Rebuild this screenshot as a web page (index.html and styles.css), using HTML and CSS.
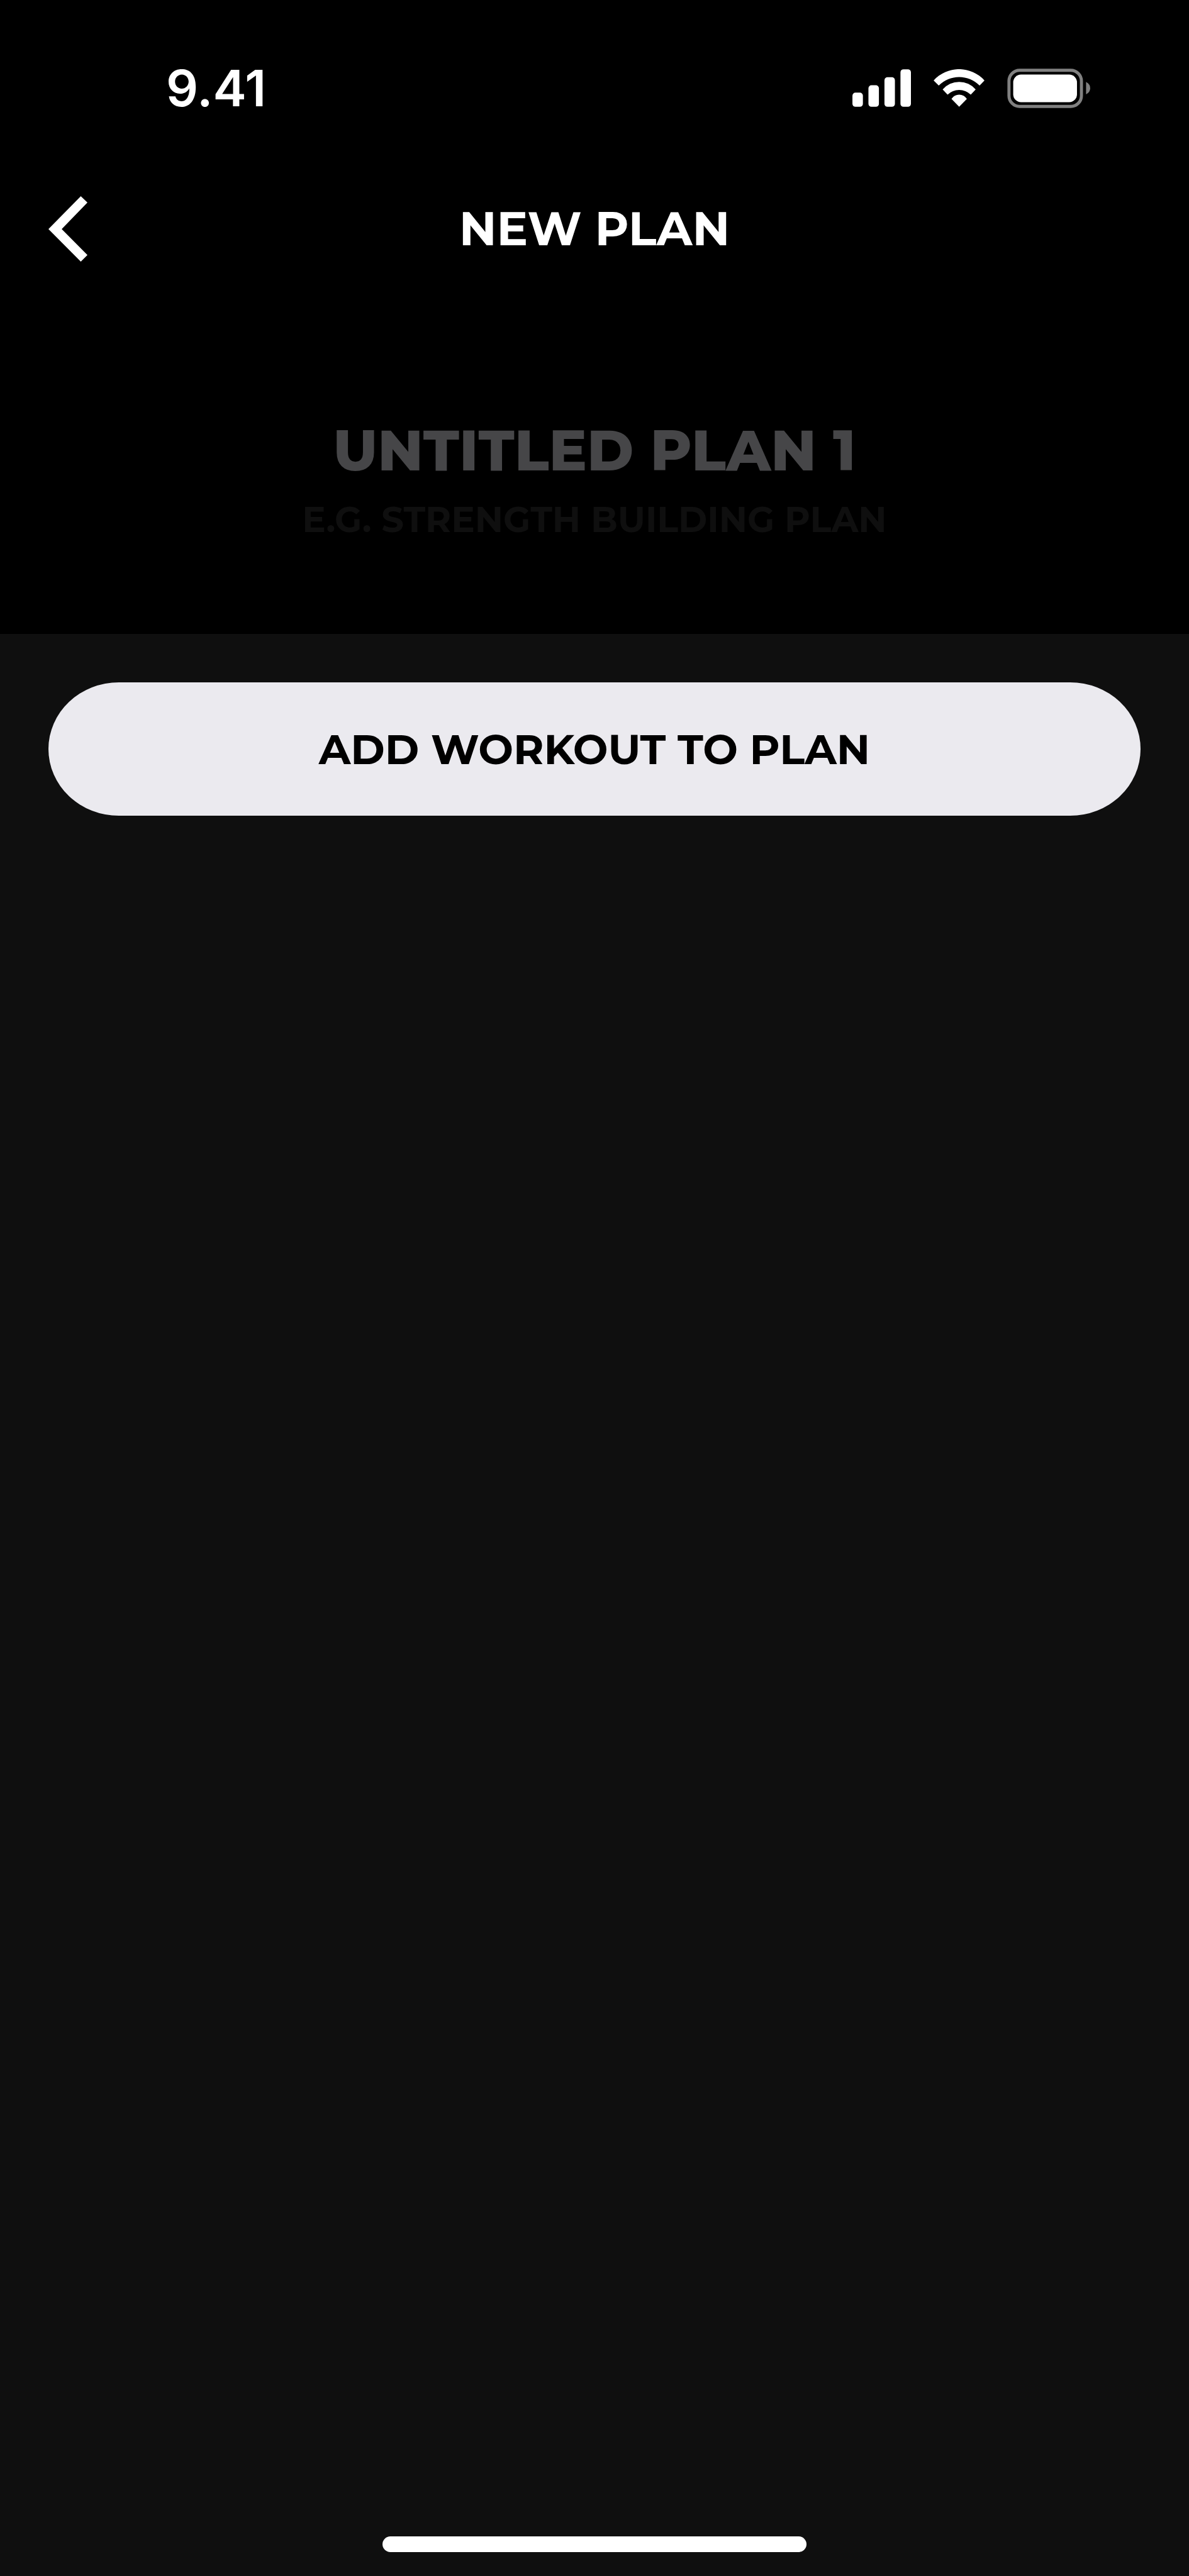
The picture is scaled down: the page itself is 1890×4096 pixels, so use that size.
FILE: index.html
```html
<!DOCTYPE html>
<html lang="en">
<head>
    <meta charset="UTF-8">
    <meta name="viewport" content="width=device-width, initial-scale=1.0">
    <title>New Plan</title>
    <link rel="stylesheet" href="styles.css">
</head>
<body>
    <div class="screen">
        <header class="header">
            <div class="status-bar">
                <span class="time">9.41</span>
                <div class="status-icons">
                    <svg class="signal" viewBox="0 0 95 61" fill="#fff" aria-hidden="true">
                        <rect x="0" y="38" width="17" height="23" rx="5"/>
                        <rect x="26" y="26" width="17" height="35" rx="5"/>
                        <rect x="52" y="13" width="17" height="48" rx="5"/>
                        <rect x="78" y="0" width="17" height="61" rx="5"/>
                    </svg>
                    <svg class="wifi" viewBox="444 65 248 184" fill="#fff" aria-hidden="true">
                        <path d="M444 120A167 167 0 0 1 692 120L668 145A139 139 0 0 0 469 145Z"/>
                        <path d="M488 164A106 106 0 0 1 649 164L625 189A81 81 0 0 0 512 189Z"/>
                        <path d="M531 210A44 44 0 0 1 606 210L568.500 248Z"/>
                    </svg>
                    <svg class="battery" viewBox="800 61 402 192" aria-hidden="true">
                        <rect x="808.500" y="69.500" width="351" height="175" rx="52" fill="none" stroke="#808080" stroke-width="15"/>
                        <rect x="829" y="90" width="309" height="134" rx="38" fill="#fff"/>
                        <path d="M1182 126Q1202 137 1202 156Q1202 175 1182 186Z" fill="#808080"/>
                    </svg>
                </div>
            </div>

            <nav class="nav">
                <button class="back" type="button" aria-label="Back">
                    <svg class="back-icon" viewBox="54 47 188 315" fill="#fff" aria-hidden="true">
                        <path d="M210 47L242 77L118 205L242 330L210 362L54 205Z"/>
                    </svg>
                </button>
                <h1 class="title">NEW PLAN</h1>
            </nav>

            <div class="plan">
                <input class="plan-name" id="plan-name" type="text" placeholder="UNTITLED PLAN 1">
                <label class="plan-hint" for="plan-name">E.G. STRENGTH BUILDING PLAN</label>
            </div>
        </header>

        <main class="content">
            <button class="add-button" type="button">ADD WORKOUT TO PLAN</button>
        </main>

        <div class="home-indicator"></div>
    </div>
</body>
</html>
```

FILE: styles.css
```css
:root {
    --header-bg: #000000;
    --background-color: #0f0f0f;
    --text-color: #ffffff;
    --placeholder-color: #464648;
    --hint-color: #0f0f0f;
    --button-bg: #ebeaef;
}

* {
    margin: 0;
    padding: 0;
    box-sizing: border-box;
}

body {
    font-family: 'Montserrat', 'Inter', sans-serif;
    font-weight: 700;
    background-color: var(--background-color);
    color: var(--text-color);
}

.screen {
    min-height: 100vh;
    display: flex;
    flex-direction: column;
}

.header {
    background-color: var(--header-bg);
    padding: 100px 77px 144px;
}

.status-bar {
    display: flex;
    justify-content: space-between;
    align-items: center;
    height: 80px;
    padding: 0 80px 0 187px;
}

.time {
    font-family: 'Inter', sans-serif;
    font-size: 80px;
    font-weight: 600;
    line-height: 80px;
}

.status-icons {
    display: flex;
    align-items: center;
    gap: 36px;
}

.signal {
    width: 93px;
    height: 60px;
}

.wifi {
    width: 81px;
    height: 60px;
}

.battery {
    width: 132px;
    height: 63px;
}

.nav {
    display: grid;
    grid-template-columns: 1fr auto 1fr;
    align-items: center;
    margin-top: 132px;
}

.back {
    justify-self: start;
    height: 104px;
    background: none;
    border: none;
    cursor: pointer;
}

.back-icon {
    display: block;
    width: 62px;
    height: 104px;
}

.title {
    font-size: 74px;
    line-height: 104px;
}

.plan {
    display: flex;
    flex-direction: column;
    align-items: center;
    margin-top: 244px;
    gap: 18px;
}

.plan-name {
    width: 100%;
    height: 112px;
    background: none;
    border: none;
    outline: none;
    color: var(--text-color);
    font-family: inherit;
    font-size: 90px;
    font-weight: 800;
    text-align: center;
}

.plan-name::placeholder {
    color: var(--placeholder-color);
    opacity: 1;
}

.plan-hint {
    margin-bottom: 2px;
    color: var(--hint-color);
    font-size: 56px;
    line-height: 72px;
}

.content {
    flex: 1;
    padding: 77px;
}

.add-button {
    display: block;
    width: 100%;
    height: 212px;
    background-color: var(--button-bg);
    color: #000000;
    border: none;
    border-radius: 112px / 50%;
    font-family: inherit;
    font-size: 66px;
    font-weight: 700;
    cursor: pointer;
}

.home-indicator {
    align-self: center;
    width: 674px;
    height: 25px;
    margin-bottom: 38px;
    background-color: var(--text-color);
    border-radius: 16px;
}
```
